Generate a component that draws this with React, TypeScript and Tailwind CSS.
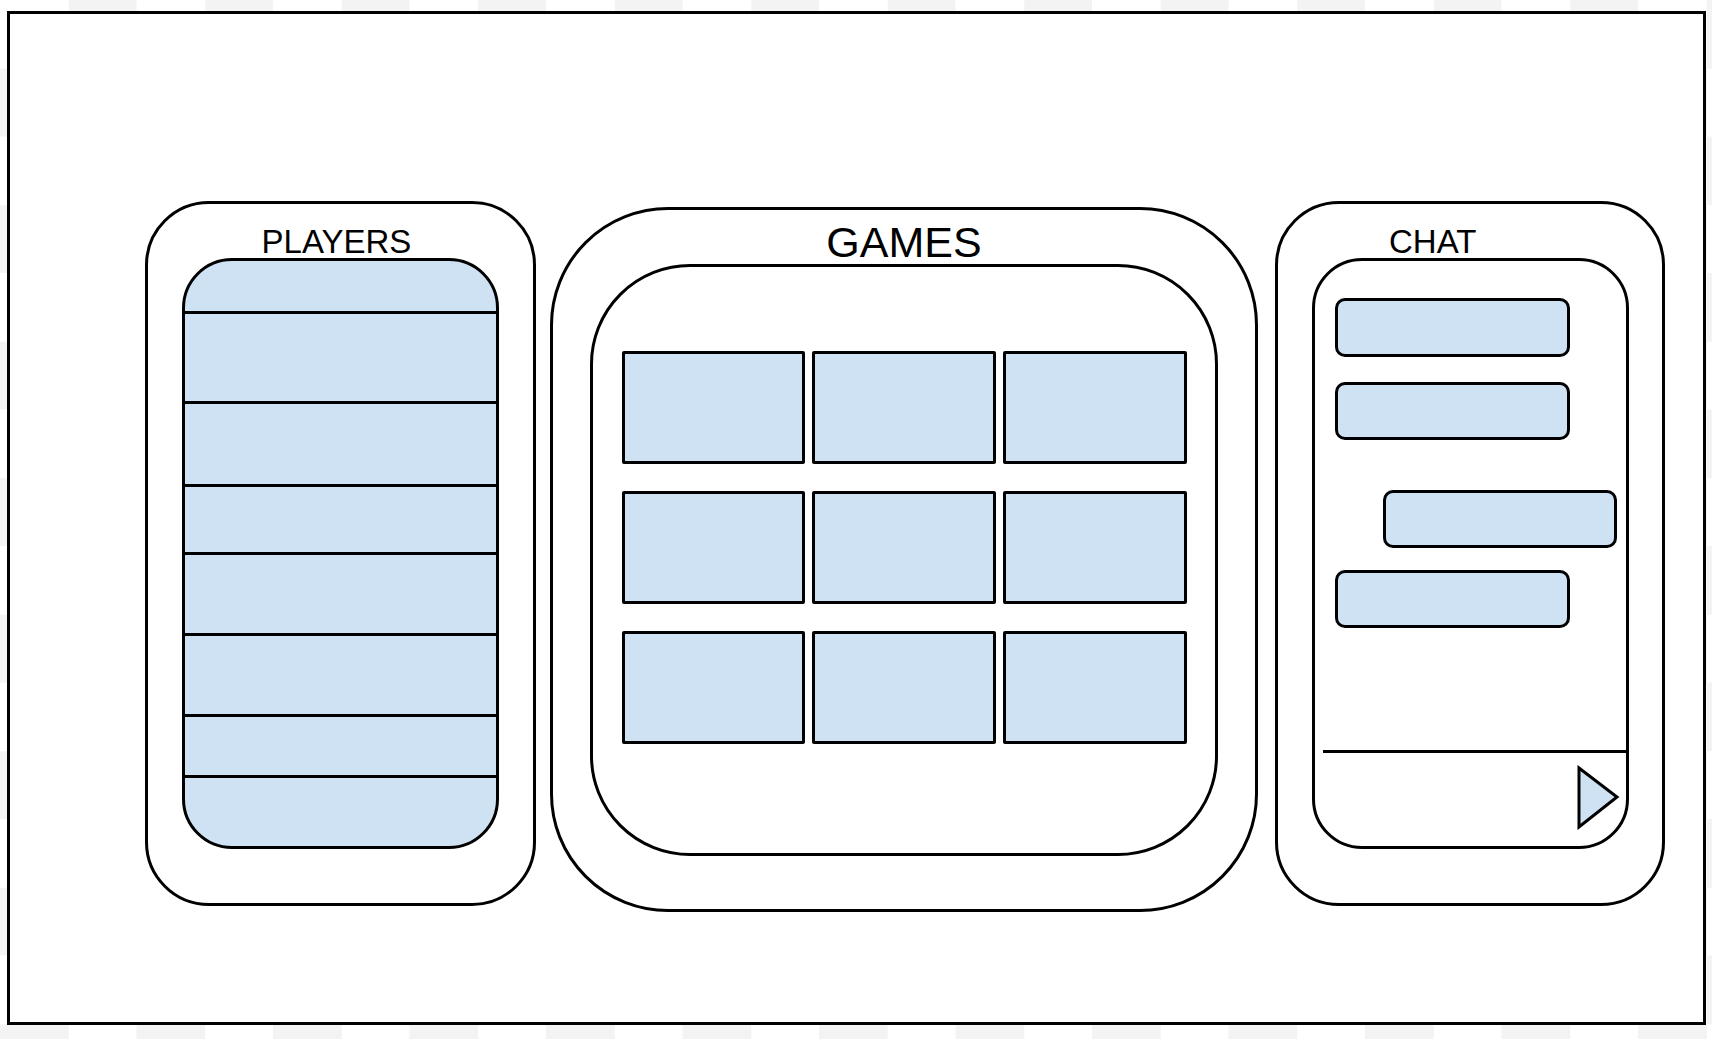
import React, { memo } from "react";

const BLUE = "bg-[#cfe2f3]";

// heights of the player rows (border-box, each has a 3px bottom rule)
const playerRows = [53, 90, 83, 68, 81, 81, 61];

const chatMessages = [
  { id: 1, className: "mt-[37px] ml-[20px] w-[235px] h-[59px]" },
  { id: 2, className: "mt-[25px] ml-[20px] w-[235px] h-[58px]" },
  { id: 3, className: "mt-[50px] ml-[68px] w-[234px] h-[58px]" },
  { id: 4, className: "mt-[22px] ml-[20px] w-[235px] h-[58px]" },
];

const PlayersPanel = memo(function PlayersPanel() {
  return (
    <div className="w-[391px] h-[705px] border-[3px] border-black rounded-[64px] flex flex-col items-center bg-white">
      <p className="pt-[21px] text-[33px] leading-none text-black -translate-x-[4px]">PLAYERS</p>
      <div className={`w-[317px] h-[591px] border-[3px] border-black rounded-[50px] overflow-hidden flex flex-col ${BLUE}`}>
        {playerRows.map((h, i) => (
          <div key={i} className="border-b-[3px] border-black shrink-0" style={{ height: h }} />
        ))}
        <div className="flex-1" />
      </div>
    </div>
  );
});

const GamesPanel = memo(function GamesPanel() {
  return (
    <div className="mt-[6px] ml-[14px] w-[708px] h-[705px] border-[3px] border-black rounded-[118px] flex flex-col items-center bg-white">
      <p className="pt-[11px] text-[43px] leading-none text-black">GAMES</p>
      <div className="w-[628px] h-[592px] border-[3px] border-black rounded-[100px] pl-[29px] pt-[84px]">
        <div className="grid grid-cols-[183px_184px_184px] auto-rows-[113px] gap-x-[7px] gap-y-[27px]">
          {Array.from({ length: 9 }).map((_, i) => (
            <div key={i} className={`border-[3px] border-black rounded-[2px] ${BLUE}`} />
          ))}
        </div>
      </div>
    </div>
  );
});

const ChatPanel = memo(function ChatPanel() {
  return (
    <div className="ml-[17px] w-[390px] h-[705px] border-[3px] border-black rounded-[64px] flex flex-col items-center bg-white">
      <p className="self-start ml-[111px] pt-[21px] text-[33px] leading-none text-black">CHAT</p>
      <div className="w-[317px] h-[591px] border-[3px] border-black rounded-[50px] flex flex-col">
        {chatMessages.map((m) => (
          <div key={m.id} className={`border-[3px] border-black rounded-[10px] ${BLUE} ${m.className}`} />
        ))}
        <div className="mt-[122px] ml-[8px] w-[304px] h-[3px] bg-black" />
        <svg className="mt-[12px] ml-[261px]" width="44" height="65" viewBox="0 0 44 65">
          <polygon points="3,3 41,32 3,62" fill="#cfe2f3" stroke="#000" strokeWidth="3" strokeLinejoin="miter" />
        </svg>
      </div>
    </div>
  );
});

export default function App() {
  return (
    <div className="w-[1712px] h-[1039px] overflow-hidden font-['Liberation_Sans',Arial,sans-serif] bg-white bg-[conic-gradient(#f3f3f3_25%,#ffffff_0_50%,#f3f3f3_0_75%,#ffffff_0)] bg-[length:136.5px_136.5px] pt-[11px] pl-[7px]">
      <div className="w-[1699px] h-[1014px] border-[3px] border-black bg-white">
        <div className="flex items-start pl-[135px] pt-[187px]">
          <PlayersPanel />
          <GamesPanel />
          <ChatPanel />
        </div>
      </div>
    </div>
  );
}
